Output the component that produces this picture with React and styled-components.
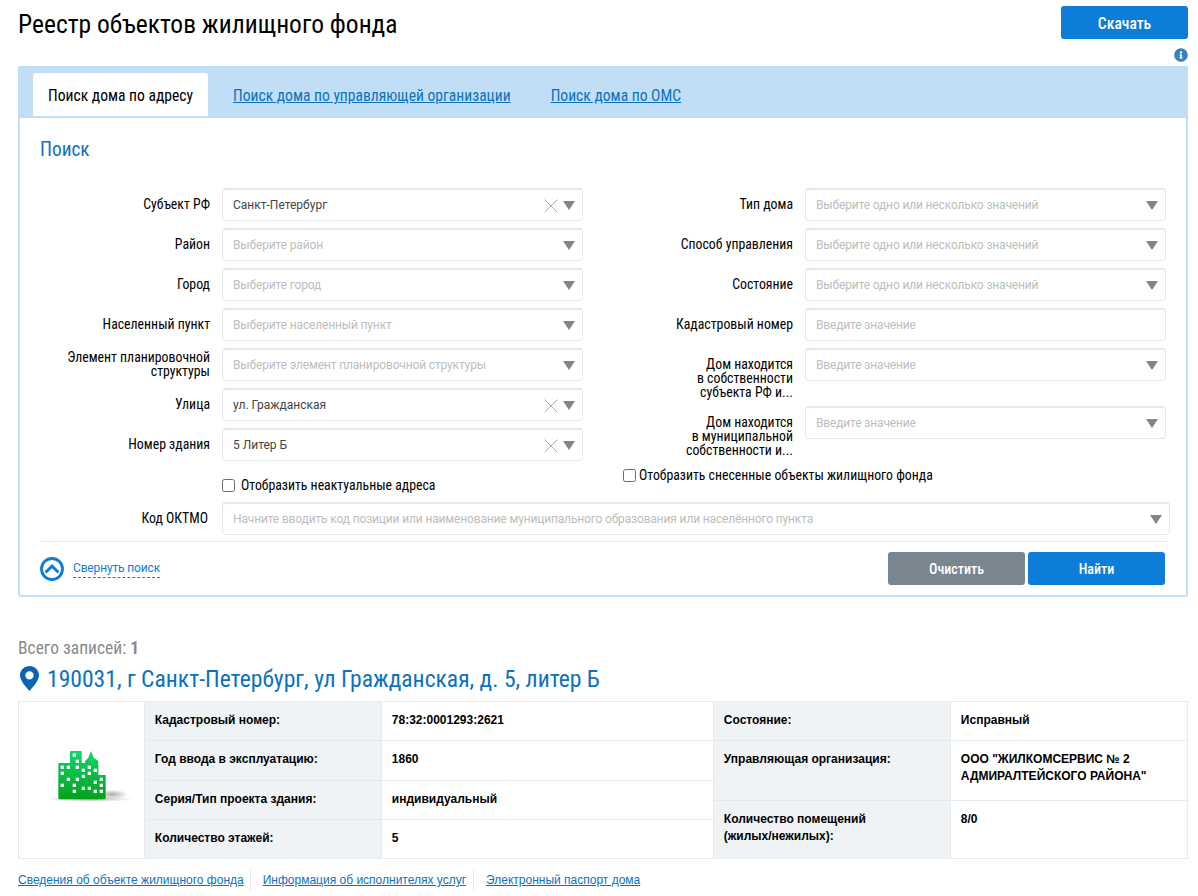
import React from "react";
import styled, { createGlobalStyle } from "styled-components";
import { FaInfoCircle } from "react-icons/fa";

const GlobalStyle = createGlobalStyle`
  html, body {
    margin: 0;
    padding: 0;
    background: #fff;
    font-family: Roboto, "Liberation Sans", sans-serif;
    color: #000;
  }
  * {
    box-sizing: border-box;
  }
`;

const condensed = `
  font-family: Roboto, "Liberation Sans", sans-serif;
  font-stretch: 75%;
`;

const Page = styled.div`
  width: 1198px;
  height: 896px;
  overflow: hidden;
  padding: 6px 10px 0 18px;
`;

const Header = styled.header`
  display: flex;
  justify-content: space-between;
  align-items: flex-start;
  height: 33px;
`;

const Title = styled.h1`
  ${condensed}
  margin: 2px 0 0;
  font-size: 25.5px;
  line-height: 32px;
  font-weight: 400;
`;

const Button = styled.button`
  ${condensed}
  width: ${(p) => p.$width}px;
  height: 33px;
  padding: ${(p) => (p.$size ? "3px" : "0")} 0 0;
  border: 0;
  border-radius: 3px;
  background: ${(p) => (p.$grey ? "#7a868f" : "#0d7dd8")};
  color: #fff;
  font-size: ${(p) => p.$size || 14}px;
  font-weight: 500;
`;

const InfoLine = styled.div`
  display: flex;
  justify-content: flex-end;
  height: 27px;
  padding-top: 9px;
  color: #3b80bd;
  font-size: 14px;
`;

const Tabs = styled.nav`
  display: flex;
  align-items: flex-end;
  height: 52px;
  padding-left: 15px;
  background: #c0dff7;
`;

const ActiveTab = styled.div`
  ${condensed}
  width: 175px;
  height: 43px;
  margin-bottom: 2px;
  border-radius: 3px 3px 0 0;
  background: #fff;
  font-size: 15.6px;
  line-height: 47px;
  text-align: center;
`;

const TabLink = styled.a`
  ${condensed}
  margin: 0 0 2px ${(p) => p.$gap}px;
  height: 43px;
  color: #0d72bd;
  font-size: 15.6px;
  line-height: 47px;
  text-decoration: underline;
`;

const Panel = styled.section`
  height: 479px;
  padding: 0 20px;
  border: 2px solid #c0dff7;
  border-top: 0;
  border-radius: 0 0 3px 3px;
`;

const PanelTitle = styled.h2`
  ${condensed}
  margin: 0;
  padding-top: 20px;
  height: 70px;
  color: #0d72bd;
  font-size: 19.3px;
  line-height: 24px;
  font-weight: 400;
`;

const FormColumns = styled.div`
  display: grid;
  grid-template-columns: 582px 544px;
  height: 314px;
`;

const FormColumn = styled.div`
  display: flex;
  flex-direction: column;
`;

const Field = styled.div`
  display: grid;
  grid-template-columns: ${(p) => p.$label}px 361px;
  column-gap: 12px;
  align-items: start;
  height: ${(p) => p.$height || 40}px;
`;

const Label = styled.label`
  ${condensed}
  display: flex;
  justify-content: flex-end;
  align-items: ${(p) => (p.$top ? "flex-start" : "center")};
  min-height: 33px;
  padding: ${(p) => (p.$top ? "9px 0 0" : "0 0 1px")};
  font-size: 13.8px;
  line-height: 14px;
  text-align: right;
`;

const Control = styled.div`
  position: relative;
  display: flex;
  align-items: center;
  height: 33px;
  padding: 0 10px;
  border: 1px solid #e4e8ec;
  border-top-width: 2px;
  border-radius: 4px;
  background: #fff;
  font-size: 12px;
  letter-spacing: ${(p) => (p.$filled ? 0 : -0.15)}px;
  color: ${(p) => (p.$filled ? "#444" : "#bdbdbd")};
`;

const Arrow = styled.span`
  position: absolute;
  right: 7px;
  top: 11px;
  width: 0;
  height: 0;
  border-left: 6.5px solid transparent;
  border-right: 6.5px solid transparent;
  border-top: 9px solid #858585;
`;

const Clear = styled.svg`
  position: absolute;
  right: 24px;
  top: 9px;
  width: 14px;
  height: 14px;
  stroke: #a9adb1;
  stroke-width: 1;
  fill: none;
`;

const CheckRow = styled.label`
  ${condensed}
  display: flex;
  align-items: center;
  gap: ${(p) => p.$gap}px;
  height: 20px;
  margin: ${(p) => p.$margin};
  font-size: 13.8px;
`;

const CheckBox = styled.span`
  width: 13px;
  height: 13px;
  border: 1px solid #6c6c6c;
  border-radius: 2.5px;
  background: #fff;
`;

const OktmoRow = styled.div`
  display: grid;
  grid-template-columns: 168px 948px;
  column-gap: 14px;
  align-items: center;
  height: 33px;
`;

const PanelFooter = styled.div`
  display: flex;
  align-items: flex-start;
  justify-content: space-between;
  height: 50px;
  margin: 6px -1px 0 0;
  border-top: 1px solid #e3e7ea;
  padding-top: 10px;
`;

const Collapse = styled.div`
  display: flex;
  align-items: center;
  gap: 9px;
  margin-top: 5px;
`;

const CollapseLink = styled.a`
  color: #0d7dd8;
  font-size: 12px;
  letter-spacing: -0.15px;
  line-height: 17px;
  border-bottom: 1px dashed #0d7dd8;
`;

const FooterButtons = styled.div`
  display: flex;
  gap: 3px;
  margin-right: 2px;
`;

const Count = styled.div`
  ${condensed}
  margin-top: 41px;
  height: 20px;
  color: #8a8a8a;
  font-size: 17.5px;
  line-height: 20px;

  b {
    font-weight: 700;
  }
`;

const Address = styled.h3`
  ${condensed}
  display: flex;
  align-items: center;
  gap: 8px;
  margin: 0;
  height: 43px;
  padding: 0 0 2px 2px;
  color: #0d72bd;
  font-size: 23.6px;
  font-weight: 400;
`;

const InfoTable = styled.div`
  display: flex;
  height: 158px;
  border: 1px solid #e6eaed;
  font-family: "Liberation Sans", Arial, sans-serif;
  font-size: 12px;
  font-weight: 700;
`;

const PictureCell = styled.div`
  display: flex;
  align-items: center;
  width: 125px;
  padding: 0 0 12px 21px;
`;

const InfoColumn = styled.div`
  display: flex;
  flex-direction: column;
  width: ${(p) => p.$width}px;
`;

const InfoRow = styled.div`
  display: grid;
  grid-template-columns: ${(p) => p.$label}px 1fr;
  height: ${(p) => p.$height}px;

  & + & {
    border-top: 1px solid #e6eaed;
  }
`;

const InfoLabel = styled.div`
  padding: ${(p) => (p.$top ? "10px 9px 0 10px" : "0 9px 2px 10px")};
  display: flex;
  align-items: ${(p) => (p.$top ? "flex-start" : "center")};
  background: #f0f3f6;
  border-left: 1px solid #e6eaed;
  border-right: 1px solid #e6eaed;
  line-height: 17px;
`;

const InfoValue = styled(InfoLabel)`
  background: #fff;
  border: 0;
`;

const LinksRow = styled.div`
  display: flex;
  align-items: center;
  margin-top: 6px;
  height: 30px;
  font-family: "Liberation Sans", Arial, sans-serif;
  font-size: 12px;
`;

const BottomLink = styled.a`
  color: #0d72bd;
  text-decoration: underline;
  padding: 4px ${(p) => (p.$first ? 6 : 7)}px 4px ${(p) => (p.$first ? 0 : 12)}px;
  border-left: ${(p) => (p.$first ? "0" : "1px solid #e6eaed")};
`;

const CityIcon = () => (
  <svg width="100" height="70" viewBox="0 0 300 210">
    <defs>
      <linearGradient id="city" x1="0" y1="0" x2="0" y2="1">
        <stop offset="0" stopColor="#0fd66c" />
        <stop offset="1" stopColor="#06a01a" />
      </linearGradient>
      <radialGradient id="cityShadow" cx="0.5" cy="0.5" r="0.5">
        <stop offset="0" stopColor="#8d8d8d" stopOpacity="0.75" />
        <stop offset="1" stopColor="#9a9a9a" stopOpacity="0" />
      </radialGradient>
    </defs>
    <ellipse cx="150" cy="180" rx="130" ry="9" fill="url(#cityShadow)" />
    <ellipse cx="215" cy="166" rx="50" ry="14" fill="url(#cityShadow)" />
    <path
      d="M58 72H90V38Q90 36 92 36H123Q125 36 125 38V72H135V66L145 56L153 36L161 56L175 66V108H197V178Q197 181 194 181H58Q55 181 55 178V75Q55 72 58 72Z"
      fill="url(#city)"
    />
    {[
      [103, 48], [112, 67], [67, 85], [85, 85], [112, 85], [130, 94], [148, 85], [166, 94],
      [67, 103], [148, 103], [130, 112], [85, 121], [112, 121], [184, 121], [166, 130],
      [67, 139], [184, 139], [103, 139], [130, 148], [148, 148], [103, 157], [166, 157], [184, 157],
    ].map(([x, y]) => (
      <rect key={`${x}-${y}`} x={x - 5} y={y - 5} width="10" height="10" fill="#f2fff6" />
    ))}
  </svg>
);

const PinIcon = () => (
  <svg width="19" height="25" viewBox="0 0 19 25">
    <path
      fillRule="evenodd"
      d="M9.5 0C4.3 0 0 4.1 0 9.3 0 15 6.5 21.5 9.5 25 12.5 21.5 19 15 19 9.3 19 4.1 14.7 0 9.5 0ZM9.5 5.2a4.2 4.2 0 1 1 0 8.4 4.2 4.2 0 0 1 0-8.4Z"
      fill="#0a64b0"
    />
  </svg>
);

const CollapseIcon = () => (
  <svg width="24" height="24" viewBox="0 0 24 24" fill="none" stroke="#0d7dd8">
    <circle cx="12" cy="12" r="10.5" strokeWidth="2.8" />
    <path d="M6.5 14.5L12 9.2L17.5 14.5" strokeWidth="3" strokeLinecap="round" />
  </svg>
);

const Select = ({ placeholder, value }) => (
  <Control $filled={!!value}>
    {value || placeholder}
    {value && (
      <Clear viewBox="0 0 14 14">
        <path d="M0.5 0.5L13.5 13.5M13.5 0.5L0.5 13.5" />
      </Clear>
    )}
    <Arrow />
  </Control>
);

const MANY = "Выберите одно или несколько значений";

const LEFT_FIELDS = [
  { label: "Субъект РФ", value: "Санкт-Петербург" },
  { label: "Район", placeholder: "Выберите район" },
  { label: "Город", placeholder: "Выберите город" },
  { label: "Населенный пункт", placeholder: "Выберите населенный пункт" },
  { label: "Элемент планировочной структуры", placeholder: "Выберите элемент планировочной структуры" },
  { label: "Улица", value: "ул. Гражданская" },
  { label: "Номер здания", value: "5 Литер Б" },
];

const LEFT_INFO = [
  ["Кадастровый номер:", "78:32:0001293:2621", 38],
  ["Год ввода в эксплуатацию:", "1860", 40],
  ["Серия/Тип проекта здания:", "индивидуальный", 39],
  ["Количество этажей:", "5", 39],
];

const RIGHT_INFO = [
  ["Состояние:", "Исправный", 38],
  ["Управляющая организация:", 'ООО "ЖИЛКОМСЕРВИС № 2 АДМИРАЛТЕЙСКОГО РАЙОНА"', 60],
  [<>Количество помещений<br />(жилых/нежилых):</>, "8/0", 58],
];

const App = () => {
  return (
    <Page>
      <GlobalStyle />
      <Header>
        <Title>Реестр объектов жилищного фонда</Title>
        <Button $width={127} $size={15.6}>Скачать</Button>
      </Header>
      <InfoLine>
        <FaInfoCircle />
      </InfoLine>
      <Tabs>
        <ActiveTab>Поиск дома по адресу</ActiveTab>
        <TabLink $gap={25}>Поиск дома по управляющей организации</TabLink>
        <TabLink $gap={40}>Поиск дома по ОМС</TabLink>
      </Tabs>
      <Panel>
        <PanelTitle>Поиск</PanelTitle>
        <FormColumns>
          <FormColumn>
            {LEFT_FIELDS.map((f) => (
              <Field key={f.label} $label={170}>
                <Label>{f.label}</Label>
                <Select placeholder={f.placeholder} value={f.value} />
              </Field>
            ))}
            <CheckRow $gap={6} $margin="7px 0 0 182px">
              <CheckBox />
              Отобразить неактуальные адреса
            </CheckRow>
          </FormColumn>
          <FormColumn>
            <Field $label={171}>
              <Label>Тип дома</Label>
              <Select placeholder={MANY} />
            </Field>
            <Field $label={171}>
              <Label>Способ управления</Label>
              <Select placeholder={MANY} />
            </Field>
            <Field $label={171}>
              <Label>Состояние</Label>
              <Select placeholder={MANY} />
            </Field>
            <Field $label={171}>
              <Label>Кадастровый номер</Label>
              <Control>Введите значение</Control>
            </Field>
            <Field $label={171} $height={58}>
              <Label $top>
                <span>Дом находится<br />в собственности<br />субъекта РФ и...</span>
              </Label>
              <Select placeholder="Введите значение" />
            </Field>
            <Field $label={171} $height={58}>
              <Label $top>
                <span>Дом находится<br />в муниципальной<br />собственности и...</span>
              </Label>
              <Select placeholder="Введите значение" />
            </Field>
            <CheckRow $gap={3} $margin="1px 0 0 1px">
              <CheckBox />
              Отобразить снесенные объекты жилищного фонда
            </CheckRow>
          </FormColumn>
        </FormColumns>
        <OktmoRow>
          <Label>Код ОКТМО</Label>
          <Select placeholder="Начните вводить код позиции или наименование муниципального образования или населённого пункта" />
        </OktmoRow>
        <PanelFooter>
          <Collapse>
            <CollapseIcon />
            <CollapseLink>Свернуть поиск</CollapseLink>
          </Collapse>
          <FooterButtons>
            <Button $width={137} $grey>Очистить</Button>
            <Button $width={137}>Найти</Button>
          </FooterButtons>
        </PanelFooter>
      </Panel>
      <Count>
        Всего записей: <b>1</b>
      </Count>
      <Address>
        <PinIcon />
        190031, г Санкт-Петербург, ул Гражданская, д. 5, литер Б
      </Address>
      <InfoTable>
        <PictureCell>
          <CityIcon />
        </PictureCell>
        <InfoColumn $width={570}>
          {LEFT_INFO.map(([label, value, height]) => (
            <InfoRow key={value} $label={238} $height={height}>
              <InfoLabel>{label}</InfoLabel>
              <InfoValue>{value}</InfoValue>
            </InfoRow>
          ))}
        </InfoColumn>
        <InfoColumn $width={475}>
          {RIGHT_INFO.map(([label, value, height], i) => (
            <InfoRow key={value} $label={238} $height={height}>
              <InfoLabel $top={i > 0}><span>{label}</span></InfoLabel>
              <InfoValue $top={i > 0}>{value}</InfoValue>
            </InfoRow>
          ))}
        </InfoColumn>
      </InfoTable>
      <LinksRow>
        <BottomLink $first>Сведения об объекте жилищного фонда</BottomLink>
        <BottomLink>Информация об исполнителях услуг</BottomLink>
        <BottomLink>Электронный паспорт дома</BottomLink>
      </LinksRow>
    </Page>
  );
};

export default App;
